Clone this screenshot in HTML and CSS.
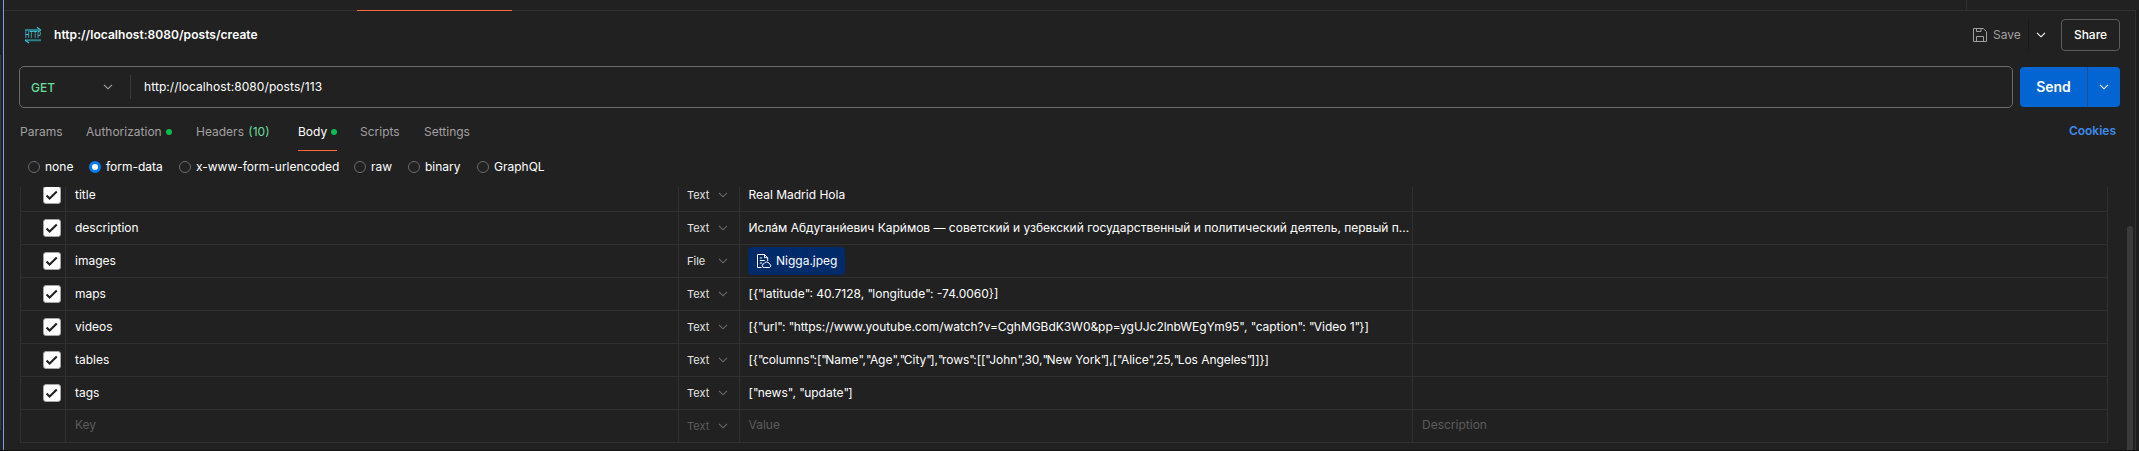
FILE: index.html
```html
<!DOCTYPE html>
<html lang="en">
<head>
<meta charset="utf-8">
<title>Request</title>
<link rel="stylesheet" href="styles.css">
</head>
<body>
<svg width="0" height="0" class="defs">
  <symbol id="chev" viewBox="0 0 10 6"><path d="M1 .8l4 4 4-4" fill="none" stroke="currentColor" stroke-width="1.1"/></symbol>
  <symbol id="check" viewBox="0 0 16 16"><path d="M2.6 8.6l3 3 7.2-7" fill="none" stroke="#212121" stroke-width="2.1"/></symbol>
</svg>
<div class="app">
  <div class="rail"><span class="rail-line"></span></div>
  <main class="pane">
    <div class="tabstrip"><span class="tab-active"></span><span class="tab-end"></span></div>
    <header class="title-row">
      <svg class="http" width="16" height="16" viewBox="0 0 16 16">
        <path d="M0 2h16v2H0zM0 12.2h16v2H0z" fill="#2c7f8c"/>
        <path d="M12 .2l4 3M4 16l-4-3" stroke="#3fb9c9" stroke-width="1.2" fill="none"/>
        <text x="0" y="11.3" textLength="16" lengthAdjust="spacingAndGlyphs" fill="#41c5d6" class="http-label">HTTP</text>
      </svg>
      <h1 class="title">http://localhost:8080/posts/create</h1>
      <div class="save">
        <svg width="14" height="14" viewBox="0 0 14 14" fill="none" stroke="#a0a0a0"><path d="M.5.5h9.8l3.2 3.2v9.8H.5zM3.5.5v3h4.5V.5M3.5 13.5v-5h7v5"/></svg>
        <span>Save</span>
      </div>
      <div class="save-more"><svg width="10" height="6" class="bold-chev"><use href="#chev"/></svg></div>
      <div class="share">Share</div>
    </header>
    <div class="url-row">
      <div class="url-box">
        <div class="method"><span>GET</span><svg width="10" height="6"><use href="#chev"/></svg></div>
        <div class="url">http://localhost:8080/posts/113</div>
      </div>
      <div class="send"><span class="send-label">Send</span><span class="send-more"><svg width="10" height="6"><use href="#chev"/></svg></span></div>
    </div>
    <nav class="tabs">
      <span class="tab t-params">Params</span>
      <span class="tab t-auth">Authorization<i class="dot"></i></span>
      <span class="tab t-headers">Headers <b class="count">(10)</b></span>
      <span class="tab t-body on">Body<i class="dot"></i></span>
      <span class="tab t-scripts">Scripts</span>
      <span class="tab">Settings</span>
      <span class="cookies">Cookies</span>
    </nav>
    <div class="radios">
      <label class="radio r1"><i></i>none</label>
      <label class="radio r2 sel"><i></i>form-data</label>
      <label class="radio r3"><i></i>x-www-form-urlencoded</label>
      <label class="radio r4"><i></i>raw</label>
      <label class="radio r5"><i></i>binary</label>
      <label class="radio"><i></i>GraphQL</label>
    </div>
    <div class="scroll">
      <div class="table">
        <div class="row first"><div class="c chk"><svg class="box" width="18" height="18"><use href="#check"/></svg></div><div class="c key">title</div><div class="c type"><span>Text</span><svg width="10" height="6"><use href="#chev"/></svg></div><div class="c val"><span>Real Madrid Hola</span></div><div class="c desc"></div></div>
        <div class="row"><div class="c chk"><svg class="box" width="18" height="18"><use href="#check"/></svg></div><div class="c key">description</div><div class="c type"><span>Text</span><svg width="10" height="6"><use href="#chev"/></svg></div><div class="c val"><span>Исла́м Абдугани́евич Кари́мов — советский и узбекский государственный и политический деятель, первый п...</span></div><div class="c desc"></div></div>
        <div class="row"><div class="c chk"><svg class="box" width="18" height="18"><use href="#check"/></svg></div><div class="c key">images</div><div class="c type"><span>File</span><svg width="10" height="6"><use href="#chev"/></svg></div><div class="c val"><div class="chip"><svg width="15" height="15" viewBox="0 0 15 15" fill="none" stroke="#fff"><path d="M4.5 13.5h-4V.5h7l3.2 3.2V7M7.5.5v3.2h3.2M2.8 4h2.4M2.8 6.5h5M2.8 9h2.4"/><path d="M7.3 13.5a1.9 1.9 0 0 1-.3-3.8 2.9 2.9 0 0 1 5.4.3 1.8 1.8 0 0 1 0 3.5z"/></svg><span>Nigga.jpeg</span></div></div><div class="c desc"></div></div>
        <div class="row"><div class="c chk"><svg class="box" width="18" height="18"><use href="#check"/></svg></div><div class="c key">maps</div><div class="c type"><span>Text</span><svg width="10" height="6"><use href="#chev"/></svg></div><div class="c val"><span>[{<i>"</i>latitude<i>"</i>: 40.7128, <i>"</i>longitude<i>"</i>: -74.0060}]</span></div><div class="c desc"></div></div>
        <div class="row"><div class="c chk"><svg class="box" width="18" height="18"><use href="#check"/></svg></div><div class="c key">videos</div><div class="c type"><span>Text</span><svg width="10" height="6"><use href="#chev"/></svg></div><div class="c val"><span class="snug">[{<i>"</i>url<i>"</i>: <i>"</i>https://www.youtube.com/watch?v=CghMGBdK3W0&amp;pp=ygUJc2lnbWEgYm95<i>"</i>, <i>"</i>caption<i>"</i>: <i>"</i>Video 1<i>"</i>}]</span></div><div class="c desc"></div></div>
        <div class="row"><div class="c chk"><svg class="box" width="18" height="18"><use href="#check"/></svg></div><div class="c key">tables</div><div class="c type"><span>Text</span><svg width="10" height="6"><use href="#chev"/></svg></div><div class="c val"><span class="snug dense">[{<i>"</i>columns<i>"</i>:[<i>"</i>Name<i>"</i>,<i>"</i>Age<i>"</i>,<i>"</i>City<i>"</i>],<i>"</i>rows<i>"</i>:[[<i>"</i>John<i>"</i>,30,<i>"</i>New York<i>"</i>],[<i>"</i>Alice<i>"</i>,25,<i>"</i>Los Angeles<i>"</i>]]}]</span></div><div class="c desc"></div></div>
        <div class="row"><div class="c chk"><svg class="box" width="18" height="18"><use href="#check"/></svg></div><div class="c key">tags</div><div class="c type"><span>Text</span><svg width="10" height="6"><use href="#chev"/></svg></div><div class="c val"><span>[<i>"</i>news<i>"</i>, <i>"</i>update<i>"</i>]</span></div><div class="c desc"></div></div>
        <div class="row ghost"><div class="c chk"></div><div class="c key">Key</div><div class="c type"><span>Text</span><svg width="10" height="6"><use href="#chev"/></svg></div><div class="c val"><span>Value</span></div><div class="c desc">Description</div></div>
      </div>
      <div class="bar"></div>
    </div>
  </main>
  <div class="edge"></div>
</div>
</body>
</html>
```
FILE: styles.css
```css
* { box-sizing: border-box; }
body { margin: 0; background: #212121; color: #fff; font: 12px/16px Inter, "Noto Sans", sans-serif; overflow: hidden; }
.defs { display: none; }
svg { display: block; flex: none; }
.app { display: flex; width: 2139px; height: 451px; border-bottom: 1px solid #121212; }
.rail { width: 4px; flex: none; border-right: 1px solid #6ea5ee; padding-top: 55px; }
.rail-line { display: block; width: 1px; height: 375px; background: #3b3b3b; }
.pane { width: 2131px; flex: none; }
.edge { flex: 1; border-left: 1px solid #303030; background: #1d1d1d; margin-top: 10px; }

.tabstrip { height: 11px; border-bottom: 1px solid #303030; display: flex; }
.tab-active { width: 155px; margin-left: 353px; height: 11px; border-bottom: 1px solid #ff6c37; }
.tab-end { width: 1px; margin-left: 1454px; background: #303030; height: 10px; }

.title-row { display: flex; align-items: center; height: 48px; padding: 0 15px 0 21px; }
.http { overflow: visible; }
.http-label { font: 500 9px Inter, sans-serif; }
.title { margin: 0 auto 0 13px; font-size: 12px; line-height: 16px; font-weight: 600; letter-spacing: .05px; }
.save { display: flex; align-items: center; gap: 6px; color: #a0a0a0; width: 55px; }
.save-more { border-left: 1px solid #191919; height: 32px; width: 33px; display: flex; align-items: center; padding-left: 7px; }
.bold-chev { stroke-width: 1.5; }
.share { width: 59px; height: 32px; border: 1px solid #5c5c5c; border-radius: 4px; display: flex; align-items: center; justify-content: center; font-weight: 500; }

.url-row { display: flex; align-items: center; height: 42px; margin-top: 7px; padding: 0 15px; gap: 7px; }
.url-box { width: 1994px; height: 42px; border: 1px solid #6b6b6b; border-radius: 5px; display: flex; align-items: center; }
.method { width: 111px; height: 24px; border-right: 1px solid #3b3b3b; padding: 0 17px 0 11px; display: flex; align-items: center; justify-content: space-between; color: #6bdd9a; font-weight: 500; }
.method span { padding-top: 1px; }
.method svg { color: #a6a6a6; }
.url { padding-left: 13px; letter-spacing: .08px; }
.send { width: 100px; height: 40px; background: #0265d2; border-radius: 4px; display: flex; font-size: 14px; font-weight: 600; }
.send-label { width: 67px; display: flex; align-items: center; justify-content: center; }
.send-more { flex: 1; border-left: 1px solid #1d4f92; display: flex; align-items: center; justify-content: center; }

.tabs { display: flex; height: 44px; padding: 5px 19px 0 16px; color: #a0a0a0; }
.tab { display: flex; align-items: center; height: 38px; padding-bottom: 1px; white-space: pre; }
.tab.on { color: #fff; border-bottom: 1px solid #ff6c37; padding-bottom: 0; }
.t-params { width: 66px; }
.t-auth { width: 110px; }
.t-headers { width: 102px; }
.t-body { width: 39px; margin-right: 23px; }
.t-scripts { width: 64px; }
.dot { width: 6px; height: 6px; border-radius: 50%; background: #0cbb52; margin-left: auto; }
.t-auth .dot { margin-left: 4px; }
.count { color: #6bdd9a; font-weight: 400; margin-left: 1px; }
.cookies { margin-left: auto; color: #3d8bea; font-weight: 600; height: 36px; display: flex; align-items: center; }

.radios { display: flex; height: 35px; align-items: center; padding: 0 0 5px 24px; }
.radio { display: flex; align-items: center; gap: 5px; }
.radio i { width: 12px; height: 12px; border: 1px solid #6b6b6b; border-radius: 50%; }
.radio.sel i { border: 3px solid #097bed; background: #fff; }
.r1 { width: 61px; } .r2 { width: 90px; } .r3 { width: 175px; } .r4 { width: 54px; } .r5 { width: 69px; }

.scroll { display: flex; height: 263px; overflow: hidden; padding-left: 16px; }
.table { width: 2088px; height: 256px; border-left: 1px solid #303030; border-right: 1px solid #303030; }
.row { display: flex; height: 33px; border-bottom: 1px solid #303030; }
.row.first { height: 25px; align-items: flex-end; overflow: hidden; }
.row.first .c { height: 32px; flex-shrink: 0; }
.c { display: flex; align-items: center; border-right: 1px solid #303030; flex: none; }
.chk { width: 45px; padding-left: 22px; }
.box { background: #fff; border: 1px solid #a6a6a6; border-radius: 3px; }
.key { width: 613px; padding-left: 9px; }
.type { width: 61px; padding: 0 11px 0 8px; justify-content: space-between; font-size: 11px; color: #e6e6e6; }
.type svg { color: #6b6b6b; }
.val { width: 673px; padding-left: 8.5px; white-space: nowrap; }
.val i { font-style: normal; letter-spacing: -.8px; }
.snug { letter-spacing: -.045px; }
.dense i { letter-spacing: -1.6px; }
.desc { width: 694px; padding-left: 9px; border-right: 0; }
.chip { display: flex; align-items: center; gap: 4px; width: 97px; height: 28px; margin-left: -.5px; padding-left: 9px; background: #002b6b; border-radius: 4px; }
.ghost { color: #5c5c5c; }
.ghost .key, .ghost .val, .ghost .desc { padding-bottom: 2px; }
.ghost .type { color: #5c5c5c; }
.bar { width: 6px; height: 240px; margin: 39px 0 0 19px; border-radius: 3px; background: #3b3b3b; }
```
